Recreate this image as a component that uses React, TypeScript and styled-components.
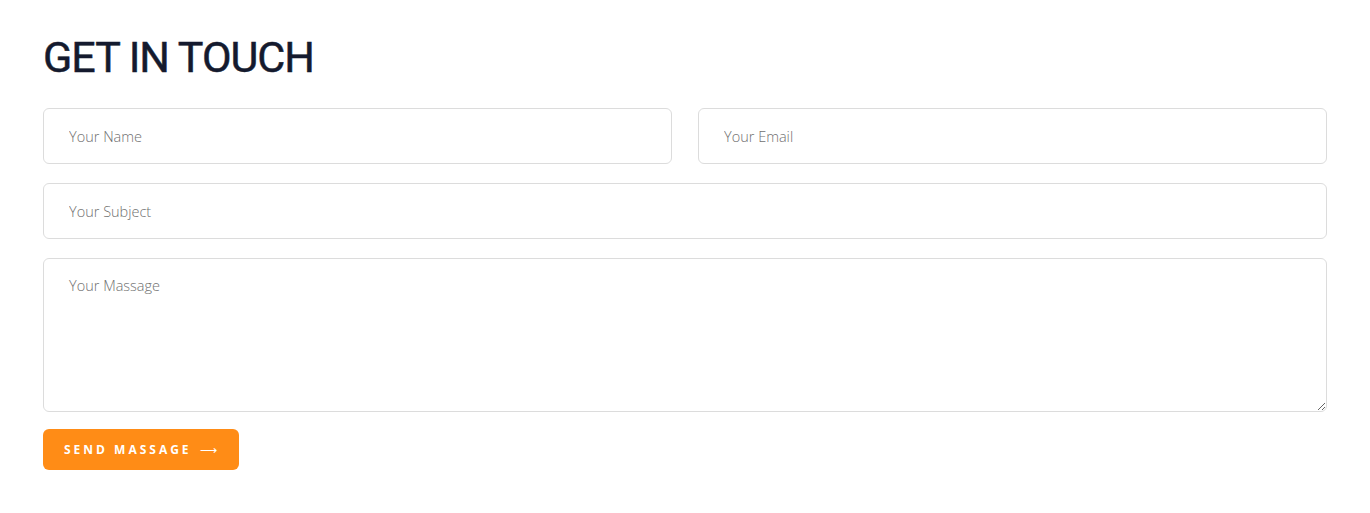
import styled, { createGlobalStyle } from 'styled-components'

const GlobalStyle = createGlobalStyle`
  * {
    box-sizing: border-box;
  }
  body {
    margin: 0;
    background: #ffffff;
    font-family: 'Open Sans', 'Liberation Sans', sans-serif;
  }
`

const Section = styled.section`
  padding: 31px 43px 40px;
`

const Title = styled.h2`
  margin: 0 0 25px;
  font-family: 'Roboto', 'Liberation Sans', sans-serif;
  font-weight: 400;
  font-size: 43px;
  line-height: 52px;
  color: #141a2e;
  letter-spacing: -1px;
  -webkit-text-stroke: 0.5px #141a2e;
`

const Form = styled.form`
  display: flex;
  flex-direction: column;
  gap: 19px;
`

const Row = styled.div`
  display: grid;
  grid-template-columns: 1fr 1fr;
  gap: 26px;
`

const fieldStyles = `
  width: 100%;
  border: 1px solid #dcdcdc;
  border-radius: 6px;
  padding: 0 25px;
  font-family: 'Open Sans', 'Liberation Sans', sans-serif;
  font-size: 14.5px;
  font-weight: 300;
  color: #333;
  background: #fff;
  outline: none;

  &::placeholder {
    color: #707070;
  }
`

const Input = styled.input`
  ${fieldStyles}
  height: 56px;
`

const TextArea = styled.textarea`
  ${fieldStyles}
  height: 154px;
  padding-top: 17px;
  resize: vertical;
  display: block;
`

const SubmitButton = styled.button`
  align-self: flex-start;
  margin-top: -2px;
  display: inline-flex;
  align-items: center;
  gap: 8px;
  height: 41px;
  padding: 0 22px 0 21px;
  border: none;
  border-radius: 6px;
  background: #ff8c16;
  color: #fff;
  font-family: 'Open Sans', 'Liberation Sans', sans-serif;
  font-weight: 700;
  font-size: 12px;
  letter-spacing: 3px;
  cursor: pointer;
`

const Arrow = styled.span`
  font-size: 12px;
  font-weight: 400;
  letter-spacing: 0;
  line-height: 1;
`

const App = () => {
  return (
    <>
      <GlobalStyle />
      <Section>
        <Title>GET IN TOUCH</Title>
        <Form onSubmit={(e) => e.preventDefault()}>
          <Row>
            <Input type="text" placeholder="Your Name" />
            <Input type="email" placeholder="Your Email" />
          </Row>
          <Input type="text" placeholder="Your Subject" />
          <TextArea placeholder="Your Massage" />
          <SubmitButton type="submit">
            SEND MASSAGE <Arrow>⟶</Arrow>
          </SubmitButton>
        </Form>
      </Section>
    </>
  )
}

export default App
